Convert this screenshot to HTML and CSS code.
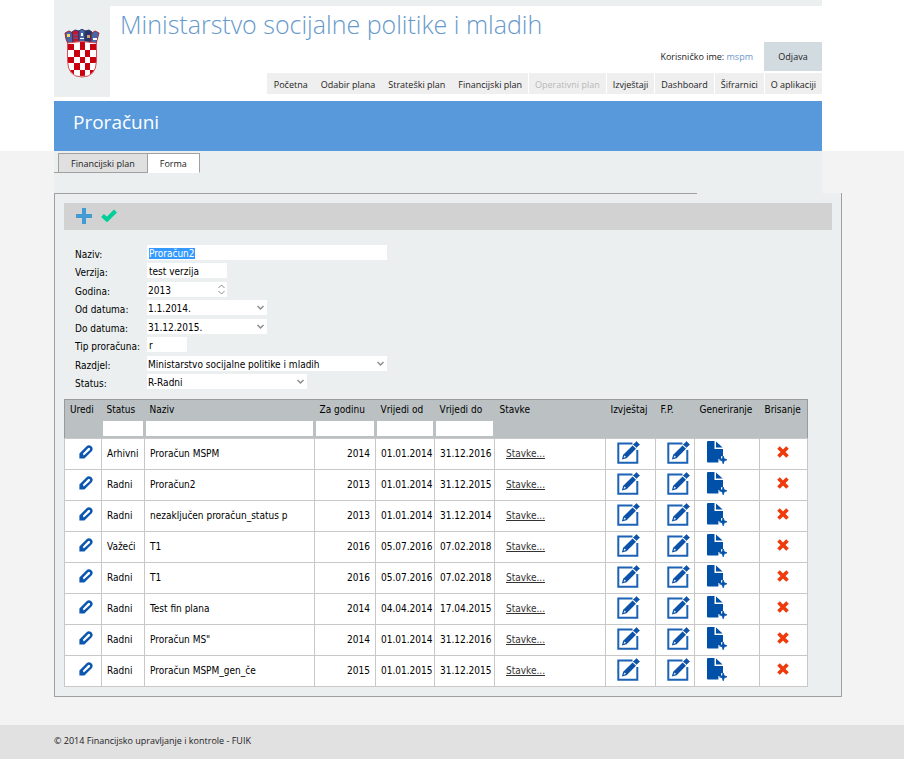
FILE: index.html
```html
<!DOCTYPE html>
<html lang="hr">
<head>
  <meta charset="UTF-8">
  <meta name="viewport" content="width=device-width, initial-scale=1.0">
  <title>Proračuni</title>
  <link rel="stylesheet" href="styles.css">
</head>
<body>
  <svg class="sprite" aria-hidden="true">
    <symbol id="icon-pen" viewBox="0 0 14 14">
      <path fill="#0b57b0" fill-rule="evenodd" d="M.4 13.600V8.600L7.600 1.200Q9.800-.6 12.400 1.200Q14.600 3.200 13 6L5.400 13.400ZM3.800 8.800L4.800 10.400L10.600 5.200Q11.600 4 10.800 3.200Q10 2.400 8.800 3.400Z"/>
    </symbol>
    <symbol id="icon-edit" viewBox="0 0 23 23">
      <path fill="none" stroke="#1c62b5" stroke-width="2" d="M15.500 2.500H1.300v19.200h19V9"/>
      <path fill="#0b52a8" d="M4.800 18.600l1.400-4.800 9.400-9.400 3.400 3.400-9.400 9.400z"/>
      <path fill="#fff" d="M6.600 16.800l.9-2.400 1.500 1.500z"/>
      <path fill="#0b52a8" stroke="#0b52a8" stroke-width=".8" d="M19.500.6l1.400 1.600 1.600 1.400-1.600 1.200-1.400 1.600-1.400-1.600-1.800-1.200 1.800-1.400z"/>
    </symbol>
    <symbol id="icon-generate" viewBox="0 0 20 23">
      <path fill="#0050a8" d="M1 0h6.500v8H16v7.200h-2v2.800h-2.600v3.500H1q-1 0-1-1V1q0-1 1-1z"/>
      <path fill="#0050a8" d="M9 .6l6.600 6H9z"/>
      <path fill="#0050a8" d="M16.200 15l1 2.800 2.800 1-2.800 1-1 3-1-3-2.800-1 2.800-1z" stroke="#0050a8" stroke-width=".8"/>
    </symbol>
    <symbol id="icon-delete" viewBox="0 0 12 12">
      <path fill="none" stroke="#ee3a0c" stroke-width="3.600" d="M1.500 1.500l9 9M10.500 1.500l-9 9"/>
    </symbol>
  </svg>

  <header class="header">
    <div class="logo">
      <svg width="36" height="49" viewBox="0 0 36 49" role="img" aria-label="Grb Republike Hrvatske">
        <defs>
          <clipPath id="shield"><path d="M4 14Q18 11 32 14V32Q32 47 18 47Q4 47 4 32Z"/></clipPath>
        </defs>
        <path fill="#4668ab" stroke="#a02636" d="M1 4l4-2 4 2 1 9-6 2-2-5z"/>
        <path fill="#c8142b" stroke="#29356f" d="M8 3l3-2 4 1v11l-6 1z"/>
        <path fill="#4668ab" stroke="#29356f" d="M15 2l3-2 3 2v11h-6z"/>
        <path fill="#26336b" stroke="#333a66" d="M21 2l4-1 3 2-1 11-6-1z"/>
        <path fill="#4668ab" stroke="#a02636" d="M28 4l3-2 4 2-2 7-1 4-5-2z"/>
        <path fill="#ffd84c" d="M3 5h3v3H3z"/>
        <path fill="#c9a36a" d="M23 6h3v3h-3z"/>
        <path fill="#fff" d="M17 4h2v3h-2zM16 9h4v1h-4zM29 9h4v2h-4z"/>
        <path fill="none" stroke="#4668ab" stroke-width="1" d="M9 6h5M9 9h5"/>
        <g clip-path="url(#shield)">
          <path fill="#fff" d="M4 12h28v36H4z"/>
          <path fill="#c9000f" d="M4 15h6v6H4zM16 13h5v8h-5zM26 15h6v6h-6zM10 21h6v7h-6zM21 21h5v7h-5zM4 28h6v6H4zM16 28h5v6h-5zM26 28h6v6h-6zM10 34h6v7h-6zM21 34h5v7h-5zM4 41h6v7H4zM16 41h5v7h-5zM26 41h6v7h-6z"/>
        </g>
        <path fill="none" stroke="#d8505c" d="M3.500 14Q18 11 32.500 14V32Q32 48 18 48Q4 48 3.500 32Z"/>
      </svg>
    </div>
    <div class="header-main">
      <h1>Ministarstvo socijalne politike i mladih</h1>
      <div class="user">
        <span>Korisničko ime: <a href="#">mspm</a></span>
        <button class="logout" type="button">Odjava</button>
      </div>
      <nav class="menu">
        <a href="#">Početna</a>
        <a href="#">Odabir plana</a>
        <a href="#">Strateški plan</a>
        <a href="#">Financijski plan</a>
        <a href="#" class="disabled">Operativni plan</a>
        <a href="#">Izvještaji</a>
        <a href="#">Dashboard</a>
        <a href="#">Šifrarnici</a>
        <a href="#">O aplikaciji</a>
      </nav>
    </div>
  </header>

  <div class="title-row">
    <h2>Proračuni</h2>
  </div>

  <main class="content">
    <div class="tabs">
      <button type="button">Financijski plan</button>
      <button type="button" class="active">Forma</button>
    </div>

    <section class="panel">
      <div class="toolbar">
        <button type="button" aria-label="Dodaj">
          <svg width="16" height="16" viewBox="0 0 16 16"><path fill="#439bd3" d="M6 0h4v6h6v4h-6v6H6v-6H0V6h6z"/></svg>
        </button>
        <button type="button" aria-label="Spremi">
          <svg width="16" height="13" viewBox="0 0 16 13"><path fill="none" stroke="#00cf9a" stroke-width="4.200" d="M1.500 6.500l4.500 4 8.500-8.500"/></svg>
        </button>
      </div>

      <form class="form">
        <label for="naziv">Naziv:</label>
        <input class="wide selected" id="naziv" type="text" value="Proračun2">
        <label for="verzija">Verzija:</label>
        <input class="short" id="verzija" type="text" value="test verzija">
        <label for="godina">Godina:</label>
        <div class="field short">
          <input id="godina" type="text" value="2013">
          <svg width="7" height="11" viewBox="0 0 7 11"><path d="M.5 4l3-3 3 3M.5 7l3 3 3-3"/></svg>
        </div>
        <label for="od">Od datuma:</label>
        <div class="field medium">
          <select id="od"><option>1.1.2014.</option></select>
          <svg class="arrow" width="9" height="6" viewBox="0 0 9 6"><path d="M1.500 1l3 3 3-3"/></svg>
        </div>
        <label for="do">Do datuma:</label>
        <div class="field medium">
          <select id="do"><option>31.12.2015.</option></select>
          <svg class="arrow" width="9" height="6" viewBox="0 0 9 6"><path d="M1.500 1l3 3 3-3"/></svg>
        </div>
        <label for="tip">Tip proračuna:</label>
        <input class="tiny" id="tip" type="text" value="r">
        <label for="razdjel">Razdjel:</label>
        <div class="field wide">
          <select id="razdjel"><option>Ministarstvo socijalne politike i mladih</option></select>
          <svg class="arrow" width="9" height="6" viewBox="0 0 9 6"><path d="M1.500 1l3 3 3-3"/></svg>
        </div>
        <label for="status">Status:</label>
        <div class="field large">
          <select id="status"><option>R-Radni</option></select>
          <svg class="arrow" width="9" height="6" viewBox="0 0 9 6"><path d="M1.500 1l3 3 3-3"/></svg>
        </div>
      </form>

      <table class="grid">
        <colgroup>
          <col class="c-edit"><col class="c-status"><col class="c-name"><col class="c-year">
          <col class="c-from"><col class="c-to"><col class="c-items"><col class="c-report">
          <col class="c-fp"><col class="c-gen"><col class="c-del">
        </colgroup>
        <thead>
          <tr>
            <th>Uredi</th><th>Status</th><th>Naziv</th><th>Za godinu</th><th>Vrijedi od</th><th>Vrijedi do</th>
            <th>Stavke</th><th>Izvještaj</th><th>F.P.</th><th>Generiranje</th><th>Brisanje</th>
          </tr>
          <tr class="filters">
            <td></td>
            <td><input type="text" aria-label="Filter status"></td>
            <td><input type="text" aria-label="Filter naziv"></td>
            <td><input type="text" aria-label="Filter godina"></td>
            <td><input type="text" aria-label="Filter vrijedi od"></td>
            <td><input type="text" aria-label="Filter vrijedi do"></td>
            <td></td><td></td><td></td><td></td><td></td>
          </tr>
        </thead>
        <tbody id="rows"></tbody>
      </table>
    </section>
  </main>

  <footer class="footer">© 2014 Financijsko upravljanje i kontrole - FUIK</footer>

  <script src="script.js"></script>
</body>
</html>
```

FILE: styles.css
```css
* {
  box-sizing: border-box;
}

body {
  margin: 0;
  min-height: 100vh;
  display: flex;
  flex-direction: column;
  background-color: #f3f3f3;
  font-family: "Open Sans", "Noto Sans", sans-serif;
  font-size: 9px;
  color: #222;
}

button, input, select {
  font: inherit;
  color: inherit;
  border: none;
  border-radius: 0;
  padding: 0;
  margin: 0;
  background: none;
}

button {
  cursor: pointer;
}

a {
  color: inherit;
  text-decoration: none;
}

.sprite {
  display: none;
}

/* header */
.header {
  display: flex;
  align-items: flex-start;
  padding: 0 82px 4px 54px;
  background-color: #fff;
}

.logo {
  width: 56px;
  height: 97px;
  padding: 29px 0 0 10px;
  background-color: #ebefef;
}

.header-main {
  flex: 1;
  border-top: 6px solid #ebefef;
}

h1 {
  margin: 0;
  padding-left: 10px;
  font-size: 25px;
  line-height: 36px;
  font-weight: 300;
  color: #6699cc;
}

.user {
  display: flex;
  justify-content: flex-end;
  align-items: center;
  gap: 11px;
}

.user a {
  color: #6c98c8;
}

.logout {
  width: 58px;
  height: 29px;
  background-color: #d2dbe0;
}

.menu {
  display: flex;
  justify-content: flex-end;
  margin-top: 2px;
}

.menu a {
  padding: 2px 6px 0;
  border-left: 1px solid #efefef;
  line-height: 19px;
  background-color: #efefef;
}

.menu .disabled,
.menu .disabled ~ a {
  border-left-color: #fff;
}

.menu .disabled {
  color: #b8b8b8;
}

/* page title */
.title-row {
  padding: 0 82px 0 54px;
  background-color: #fff;
}

h2 {
  margin: 0;
  height: 50px;
  padding-left: 19px;
  background-color: #5899db;
  font-size: 19px;
  line-height: 42px;
  font-weight: 400;
  color: #fff;
}

/* content */
.content {
  margin: 0 82px 28px 54px;
  background-color: #ebefef;
}

.tabs {
  display: flex;
  padding-top: 2px;
  margin-bottom: 20px;
}

.tabs::before {
  content: "";
  width: 4px;
  border-bottom: 1px solid #a0a0a0;
}

.tabs button {
  height: 20px;
  padding: 0 12px;
  border: 1px solid #a0a0a0;
  background-color: #e0e0e0;
}

.tabs .active {
  border-left: none;
  border-bottom-color: #fff;
  background-color: #fff;
}

.panel {
  margin-right: -20px;
  padding: 0 9px 9px;
  border: 1px solid #a0a0a0;
  border-top: none;
  background-color: #ebefef;
  font-family: "DejaVu Sans Condensed", "DejaVu Sans", sans-serif;
  font-stretch: condensed;
  font-size: 10px;
  color: #000;
}

.panel::before {
  content: "";
  display: block;
  height: 1px;
  margin: 0 135px 9px -9px;
  background-color: #a0a0a0;
}

.toolbar {
  display: flex;
  align-items: center;
  gap: 9px;
  height: 27px;
  padding: 0 12px 2px;
  background-color: #d2d2d2;
}

.toolbar button,
.toolbar svg {
  display: block;
}

.form {
  display: grid;
  grid-template-columns: 72px 1fr;
  grid-auto-rows: 15px 16px;
  row-gap: 3px;
  margin: 15px 0 9px 11px;
}

.form label {
  padding-top: 2px;
  line-height: 15px;
  white-space: nowrap;
}

.form > input,
.field {
  height: 15px;
  background-color: #fff;
}

.form > input {
  padding: 1px 2px 0;
}

.form input:focus {
  outline: none;
}

.field {
  display: flex;
  align-items: center;
  padding: 0 2px 0 1px;
}

.field input,
.field select {
  flex: 1;
  min-width: 0;
  height: 15px;
  padding-top: 1px;
  appearance: none;
}

.field svg {
  flex: none;
  fill: none;
  stroke: #8c8c8c;
}

.field .arrow {
  stroke-width: 1.5;
}

.wide { width: 240px; }
.large { width: 160px; }
.medium { width: 120px; }
.short { width: 80px; }
.tiny { width: 40px; }

.selected::selection {
  background-color: #3399ff;
  color: #fff;
}

/* table */
.grid {
  width: 744px;
  table-layout: fixed;
  border-collapse: collapse;
  border: 1px solid #999;
  background-color: #fff;
}

.c-edit { width: 37px; }
.c-status { width: 43px; }
.c-name { width: 170px; }
.c-year { width: 61px; }
.c-from { width: 59px; }
.c-to { width: 60px; }
.c-items { width: 111px; }
.c-report { width: 50px; }
.c-fp { width: 39px; }
.c-gen { width: 65px; }
.c-del { width: 48px; }

.grid thead {
  background-color: #bbc1c3;
}

.grid th {
  height: 20px;
  padding: 0 5px;
  font-weight: 400;
  text-align: left;
  white-space: nowrap;
}

.grid .num {
  text-align: right;
}

.filters td {
  height: 18px;
  padding: 1px 2px 2px 1px;
}

.filters input {
  display: block;
  width: 100%;
  height: 15px;
  background-color: #fff;
}

.grid tbody td {
  height: 31px;
  padding: 0 5px;
  border: 1px solid #c8c8c8;
  white-space: nowrap;
}

.grid tbody .icon {
  padding-bottom: 3px;
}

.grid tbody button,
.grid tbody svg {
  display: block;
}

.grid .edit {
  margin-left: 9px;
}

.grid .open {
  margin-left: 6px;
}

.grid .generate {
  margin-left: 7px;
}

.grid .delete {
  margin-left: 12px;
}

.items {
  margin-left: 6px;
  color: #333;
  text-decoration: underline;
}

/* footer */
.footer {
  flex: 1;
  min-height: 34px;
  padding: 9px 54px;
  background-color: #e1e1e1;
}
```

FILE: script.js
```js
const rows = [
  ['Arhivni', 'Proračun MSPM', 2014, '01.01.2014', '31.12.2016'],
  ['Radni', 'Proračun2', 2013, '01.01.2014', '31.12.2015'],
  ['Radni', 'nezaključen proračun_status p', 2013, '01.01.2014', '31.12.2014'],
  ['Važeći', 'T1', 2016, '05.07.2016', '07.02.2018'],
  ['Radni', 'T1', 2016, '05.07.2016', '07.02.2018'],
  ['Radni', 'Test fin plana', 2014, '04.04.2014', '17.04.2015'],
  ['Radni', 'Proračun MS"', 2014, '01.01.2014', '31.12.2016'],
  ['Radni', 'Proračun MSPM_gen_če', 2015, '01.01.2015', '31.12.2015']
];

function iconCell(icon, cls, label, w, h) {
  return `<td class="icon"><button type="button" class="${cls}" aria-label="${label}"><svg width="${w}" height="${h}"><use href="#icon-${icon}"/></svg></button></td>`;
}

document.getElementById('rows').innerHTML = rows.map(([status, name, year, from, to]) => `
  <tr>
    ${iconCell('pen', 'edit', 'Uredi', 14, 14)}
    <td>${status}</td>
    <td>${name}</td>
    <td class="num">${year}</td>
    <td>${from}</td>
    <td>${to}</td>
    <td><a class="items" href="#">Stavke...</a></td>
    ${iconCell('edit', 'open', 'Izvještaj', 23, 23)}
    ${iconCell('edit', 'open', 'Financijski plan', 23, 23)}
    ${iconCell('generate', 'generate', 'Generiraj', 20, 23)}
    ${iconCell('delete', 'delete', 'Obriši', 12, 12)}
  </tr>`).join('');

// the name is ready to be typed over
document.getElementById('naziv').select();
```
